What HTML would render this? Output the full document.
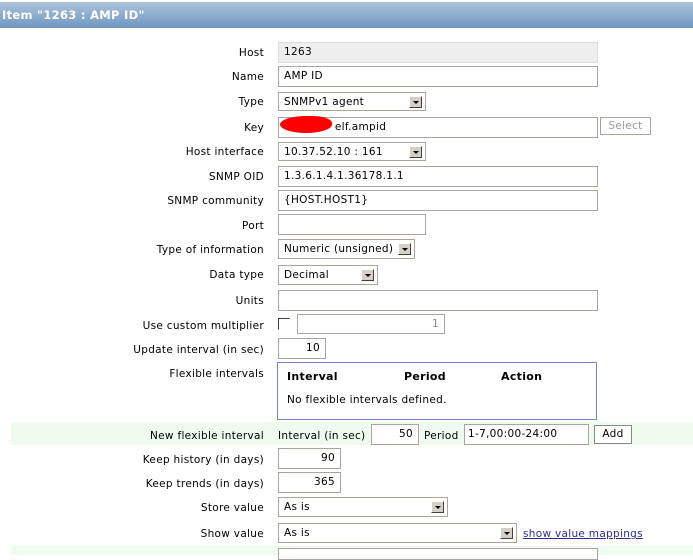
<!DOCTYPE html>
<html><head><style>
body{margin:0;width:693px;height:555px;overflow:hidden;background:#fff;font-family:"DejaVu Sans",Verdana,sans-serif;font-size:10.5px;letter-spacing:0.3px;color:#000;position:relative}
.a{position:absolute}
.hdr{left:0;top:2px;width:693px;height:26px;background:linear-gradient(#adc2da,#6e98c2);color:#fff;font-weight:bold;font-size:11.5px;line-height:26px;padding-left:2px;box-sizing:border-box}
.l{position:absolute;right:429px;text-align:right;white-space:nowrap;margin-top:1px}
.i{position:absolute;border:1px solid #aaa59a;background:#fff;box-sizing:border-box;padding-left:5px;line-height:19px;white-space:nowrap;overflow:hidden}
.r{text-align:right;padding-right:5px}
.s .b{position:absolute;right:3px;top:3px;width:13px;height:12px;background:#d4d0c8;border:1px solid;border-color:#fff #404040 #404040 #fff;box-sizing:border-box}
.s .b:after{content:"";position:absolute;left:3px;top:4px;border:3px solid transparent;border-top:3px solid #000;border-bottom:0}
.g{position:absolute;left:11px;width:682px;background:#effbef}
</style></head><body>
<div class="a hdr">Item "1263 : AMP ID"</div>
<div class="g" style="top:422px;height:23px"></div>
<div class="g" style="top:546px;height:9px"></div>

<div class="l" style="top:46px">Host</div><div class="i" style="left:278px;top:42px;width:320px;height:21px;background:#eee;border-color:#ddd">1263</div>
<div class="l" style="top:70px">Name</div><div class="i" style="left:278px;top:66px;width:320px;height:21px">AMP ID</div>
<div class="l" style="top:95px">Type</div><div class="i s" style="left:278px;top:92px;width:148px;height:19px;line-height:18px">SNMPv1 agent<span class="b"></span></div>
<div class="l" style="top:121px">Key</div><div class="i" style="left:278px;top:117px;width:320px;height:21px">&nbsp;&nbsp;&nbsp;&nbsp;&nbsp;&nbsp;&nbsp;&nbsp;&nbsp;&nbsp;&nbsp;&nbsp;&nbsp;&nbsp;elf.ampid</div>
<div class="a" style="left:280px;top:116px;width:52px;height:17px;background:#f00;border-radius:50% 40% 50% 50%"></div>
<div class="i" style="left:600px;top:117px;width:51px;height:18px;line-height:16px;color:#999;text-align:center;padding:0">Select</div>
<div class="l" style="top:145px">Host interface</div><div class="i s" style="left:278px;top:142px;width:148px;height:19px;line-height:18px">10.37.52.10 : 161<span class="b"></span></div>
<div class="l" style="top:170px">SNMP OID</div><div class="i" style="left:278px;top:166px;width:320px;height:21px">1.3.6.1.4.1.36178.1.1</div>
<div class="l" style="top:194px">SNMP community</div><div class="i" style="left:278px;top:190px;width:320px;height:21px">{HOST.HOST1}</div>
<div class="l" style="top:219px">Port</div><div class="i" style="left:278px;top:214px;width:148px;height:21px"></div>
<div class="l" style="top:243px">Type of information</div><div class="i s" style="left:278px;top:239px;width:137px;height:20px;line-height:19px">Numeric (unsigned)<span class="b"></span></div>
<div class="l" style="top:268px">Data type</div><div class="i s" style="left:278px;top:265px;width:100px;height:20px;line-height:19px">Decimal<span class="b"></span></div>
<div class="l" style="top:294px">Units</div><div class="i" style="left:278px;top:290px;width:320px;height:21px"></div>
<div class="l" style="top:319px">Use custom multiplier</div>
<div class="a" style="left:278px;top:318px;width:12px;height:12px;border:1px solid;border-color:#404040 #fff #fff #404040;box-sizing:border-box;background:#fff"></div>
<div class="i r" style="left:297px;top:314px;width:148px;height:20px;color:#888">1</div>
<div class="l" style="top:343px">Update interval (in sec)</div><div class="i r" style="left:278px;top:338px;width:48px;height:21px">10</div>
<div class="l" style="top:367px">Flexible intervals</div>
<div class="a" style="left:277px;top:362px;width:320px;height:58px;border:1px solid #6c8bc6;box-sizing:border-box">
<div class="a" style="left:9px;top:7px;font-weight:bold;font-size:11px">Interval</div>
<div class="a" style="left:126px;top:7px;font-weight:bold;font-size:11px">Period</div>
<div class="a" style="left:223px;top:7px;font-weight:bold;font-size:11px">Action</div>
<div class="a" style="left:9px;top:31px">No flexible intervals defined.</div></div>
<div class="l" style="top:429px">New flexible interval</div>
<div class="a" style="left:278px;top:430px">Interval (in sec)</div>
<div class="i r" style="left:371px;top:424px;width:48px;height:21px">50</div>
<div class="a" style="left:424px;top:430px">Period</div>
<div class="i" style="left:464px;top:424px;width:125px;height:21px;padding-left:3px">1-7,00:00-24:00</div>
<div class="i" style="left:594px;top:425px;width:38px;height:19px;line-height:17px;text-align:center;padding:0;border-color:#888">Add</div>
<div class="l" style="top:453px">Keep history (in days)</div><div class="i r" style="left:278px;top:448px;width:63px;height:21px">90</div>
<div class="l" style="top:477px">Keep trends (in days)</div><div class="i r" style="left:278px;top:472px;width:63px;height:21px">365</div>
<div class="l" style="top:501px">Store value</div><div class="i s" style="left:278px;top:497px;width:170px;height:20px;line-height:19px">As is<span class="b"></span></div>
<div class="l" style="top:527px">Show value</div><div class="i s" style="left:278px;top:523px;width:239px;height:20px;line-height:19px">As is<span class="b"></span></div>
<div class="a" style="left:523px;top:528px;color:#2b2b9c;text-decoration:underline">show value mappings</div>
<div class="i" style="left:278px;top:548px;width:320px;height:12px"></div>
</body></html>
